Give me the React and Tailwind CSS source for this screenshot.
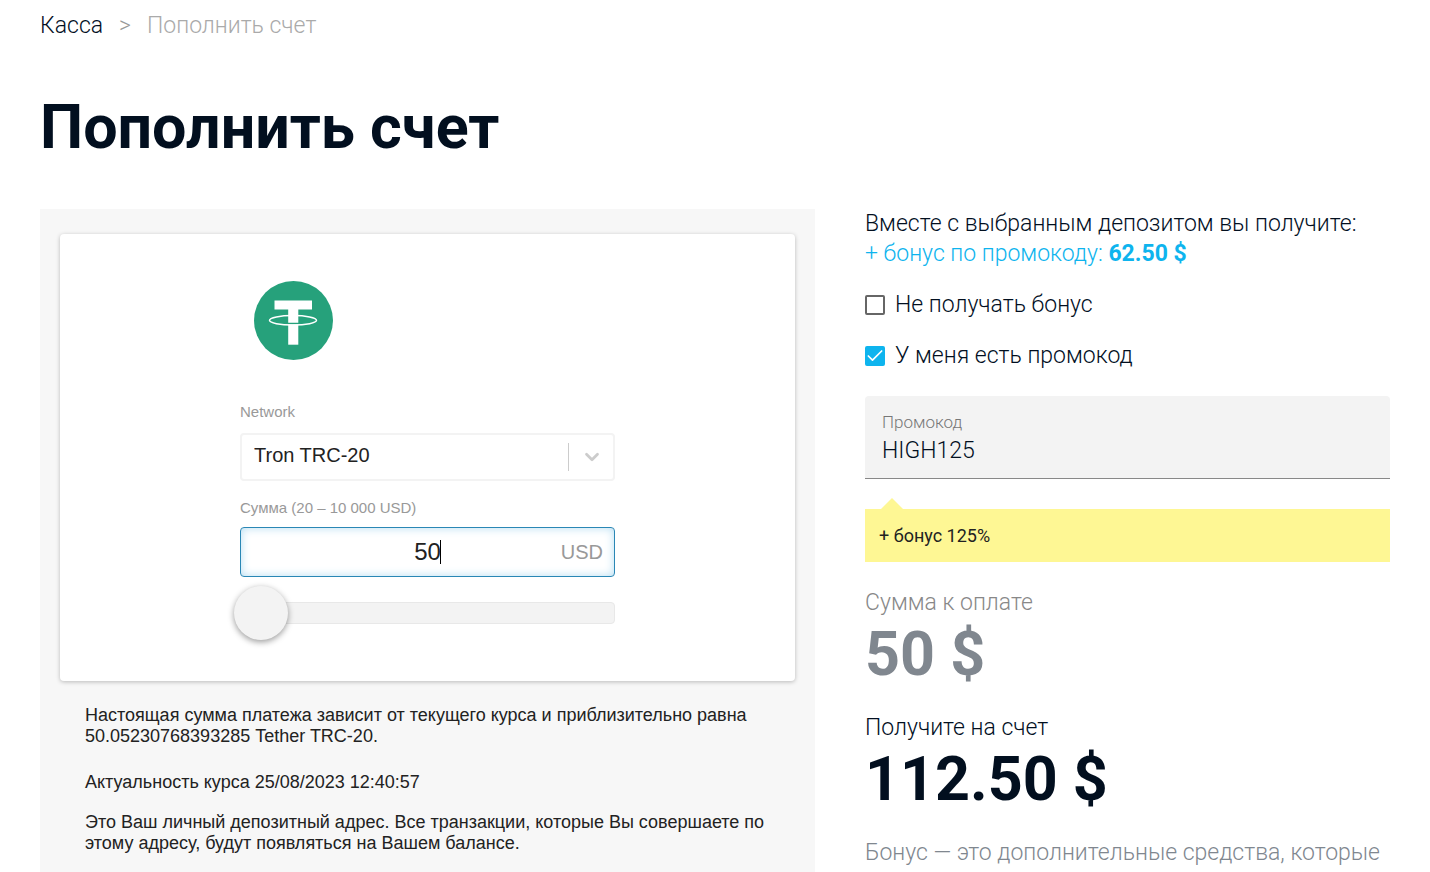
import { useState } from 'react';
import { Check, ChevronDown } from 'lucide-react';

function TetherLogo() {
  return (
    <svg viewBox="0 0 79 79" className="block w-[79px] h-[79px]" aria-hidden="true">
      <circle cx="39.5" cy="39.5" r="39.5" fill="#26a17b" />
      <path d="M20.5 19.5h37.5v9H44.3v13.200H34.200V28.500H20.500z" fill="#fff" />
      <path d="M34.200 43.300h10.100v20.400H34.200z" fill="#fff" />
      <ellipse cx="39" cy="39.300" rx="23.500" ry="4.800" fill="none" stroke="#fff" strokeWidth="1.500" />
    </svg>
  );
}

function DepositForm({ amount, setAmount }) {
  return (
    <form className="mx-auto max-w-[375px] pt-[47px] pb-[57px] text-[#222]">
      <div className="pl-3.5">
        <TetherLogo />
      </div>

      <label htmlFor="network" className="block mt-[42px] text-[15px] leading-5 text-[#999]">
        Network
      </label>
      <div className="relative mt-[11px]">
        <select
          id="network"
          className="block w-full h-12 px-3 pb-1 appearance-none rounded border-2 border-[#f3f3f3] bg-white text-xl outline-none"
        >
          <option>Tron TRC-20</option>
        </select>
        <div className="absolute inset-y-0 right-3 flex items-center pointer-events-none">
          <span className="w-px h-7 mr-3 bg-[#ccc]" />
          <ChevronDown size={22} strokeWidth={3} className="text-[#ccc]" />
        </div>
      </div>

      <label htmlFor="amount" className="block mt-[17px] text-[15px] leading-5 text-[#999]">
        Сумма (20 – 10 000 USD)
      </label>
      <div className="relative mt-[9px]">
        <input
          id="amount"
          type="text"
          value={amount}
          onChange={(e) => setAmount(e.target.value)}
          className="block w-full h-[50px] rounded border border-[#2a87b5] bg-white text-center text-2xl caret-transparent outline-none shadow-[inset_0_0_10px_#b5ddf2]"
        />
        <div className="absolute inset-0 flex items-center justify-center pl-[26px] pointer-events-none">
          <span className="w-px h-6 bg-black" />
        </div>
        <span className="absolute inset-y-0 right-3 flex items-center text-xl text-[#999] pointer-events-none">
          USD
        </span>
      </div>

      <div className="flex items-center h-[22px] mt-[25px] rounded border border-[#e8e8e8] bg-[#f3f3f3]">
        <input
          type="range"
          min="20"
          max="10000"
          value={amount}
          onChange={(e) => setAmount(e.target.value)}
          aria-label="Сумма"
          className="flex-1 -mx-2 appearance-none bg-transparent outline-none cursor-pointer [&::-webkit-slider-thumb]:appearance-none [&::-webkit-slider-thumb]:w-[54px] [&::-webkit-slider-thumb]:h-[54px] [&::-webkit-slider-thumb]:rounded-full [&::-webkit-slider-thumb]:bg-[#f3f3f3] [&::-webkit-slider-thumb]:shadow-[0_2px_6px_rgba(0,0,0,0.4)]"
        />
      </div>
    </form>
  );
}

function CheckRow({ id, label, checked, onChange }) {
  return (
    <label htmlFor={id} className="flex items-center gap-2.5 mt-[21px] cursor-pointer">
      <span className="relative flex w-5 h-5">
        <input
          id={id}
          type="checkbox"
          checked={checked}
          onChange={onChange}
          className="w-5 h-5 appearance-none rounded-xs border-2 border-[#666] checked:border-[#0eb4ee] checked:bg-[#0eb4ee]"
        />
        {checked && (
          <Check size={20} strokeWidth={2} className="absolute inset-0 text-white pointer-events-none" />
        )}
      </span>
      {label}
    </label>
  );
}

export default function App() {
  const [amount, setAmount] = useState('50');
  const [noBonus, setNoBonus] = useState(false);
  const [hasPromo, setHasPromo] = useState(true);
  const [promo, setPromo] = useState('HIGH125');

  const sum = Number(amount) || 0;
  const bonus = sum * 1.25;

  return (
    <div className="flex flex-col h-screen overflow-hidden px-10 bg-white font-['Roboto',sans-serif] font-light text-[23px] leading-[30px] text-[#020f1f]">
      <nav className="flex gap-4 pt-[11px]">
        <a href="#cashier">Касса</a>
        <span className="text-[#999]">&gt;</span>
        <span className="text-[#aaa]">Пополнить счет</span>
      </nav>

      <h1 className="mt-[50px] mb-[46px] font-bold text-[61px] leading-[72px]">Пополнить счет</h1>

      <main className="flex-1 grid grid-cols-[31fr_21fr] gap-[50px]">
        <section className="bg-[#f7f7f7] pt-[25px] px-5 font-['Liberation_Sans',sans-serif] font-normal">
          <div className="rounded bg-white shadow-[0_1px_4px_rgba(0,0,0,0.25)]">
            <DepositForm amount={amount} setAmount={setAmount} />
          </div>
          <div className="px-[25px] pt-6 text-lg leading-[21px] text-[#222]">
            <p>
              Настоящая сумма платежа зависит от текущего курса и приблизительно равна 50.05230768393285 Tether TRC-20.
            </p>
            <p className="mt-[25px]">Актуальность курса 25/08/2023 12:40:57</p>
            <p className="mt-[19px]">
              Это Ваш личный депозитный адрес. Все транзакции, которые Вы совершаете по этому адресу, будут появляться
              на Вашем балансе.
            </p>
          </div>
        </section>

        <section>
          <p>Вместе с выбранным депозитом вы получите:</p>
          <p className="text-[#0eb4ee]">
            + бонус по промокоду: <b className="font-bold">{bonus.toFixed(2)} $</b>
          </p>

          <CheckRow
            id="no-bonus"
            label="Не получать бонус"
            checked={noBonus}
            onChange={(e) => setNoBonus(e.target.checked)}
          />
          <CheckRow
            id="has-promo"
            label="У меня есть промокод"
            checked={hasPromo}
            onChange={(e) => setHasPromo(e.target.checked)}
          />

          <div className="mt-[25px] h-[83px] px-[17px] pt-4 rounded-t bg-[#f3f3f3] border-b border-[#888]">
            <label htmlFor="promo" className="block text-[17px] leading-5 text-[#777]">
              Промокод
            </label>
            <input
              id="promo"
              type="text"
              value={promo}
              onChange={(e) => setPromo(e.target.value)}
              className="block w-full h-9 bg-transparent outline-none"
            />
          </div>

          <div className="relative mt-[30px] px-3.5 py-3 bg-[#fef794] text-lg leading-[29px] text-[#222] font-normal">
            <svg viewBox="0 0 22 11" className="absolute bottom-full left-4 w-[22px] h-[11px]" aria-hidden="true">
              <path d="M0 11 11 0l11 11z" fill="#fef794" />
            </svg>
            + бонус 125%
          </div>

          <div className="mt-[26px] text-[#888]">
            <p>Сумма к оплате</p>
            <p className="font-bold text-[61px] leading-[72px] text-[#80878f]">{sum} $</p>
          </div>
          <div className="mt-[23px]">
            <p>Получите на счет</p>
            <p className="font-bold text-[61px] leading-[72px]">{(sum + bonus).toFixed(2)} $</p>
          </div>
          <p className="mt-[23px] text-[#80878f]">Бонус — это дополнительные средства, которые</p>
        </section>
      </main>
    </div>
  );
}
